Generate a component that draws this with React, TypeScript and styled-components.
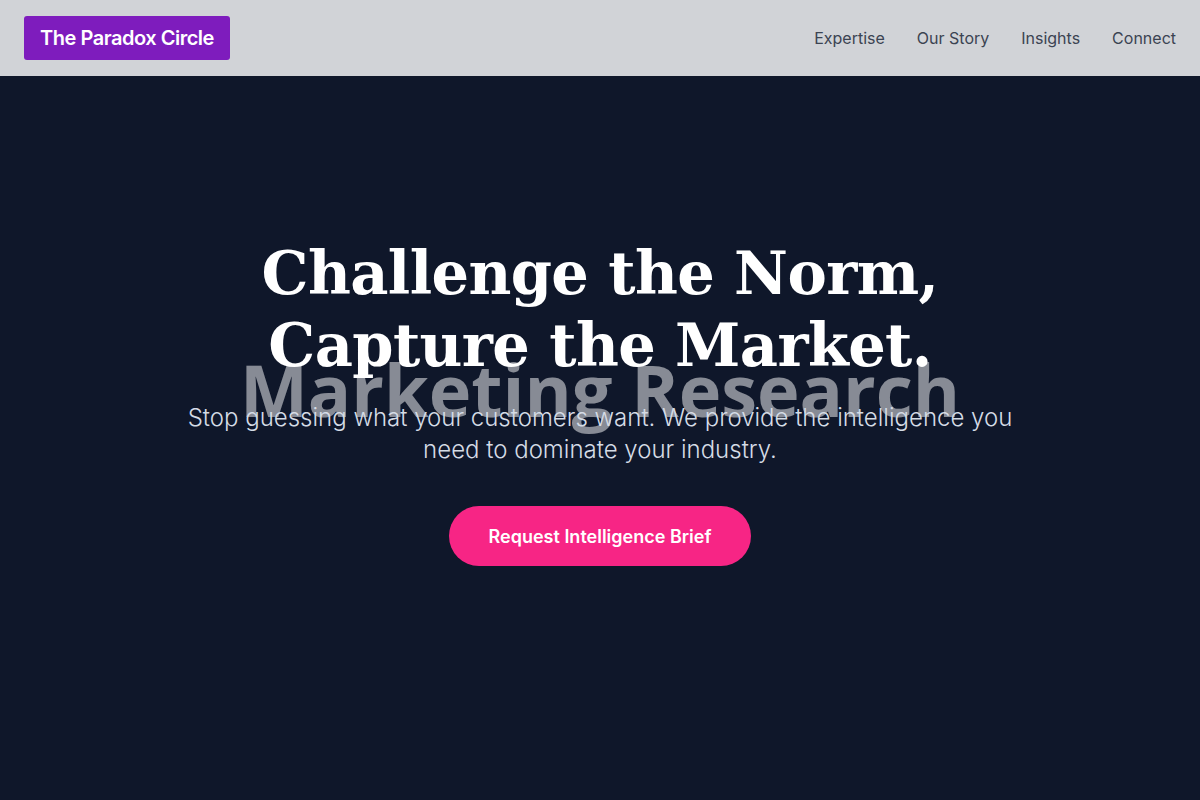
import React from "react";
import styled, { createGlobalStyle } from "styled-components";

const Global = createGlobalStyle`
  html, body { margin: 0; padding: 0; background: #0f172a; }
  body { font-family: Inter, "Noto Sans", sans-serif; }
  * { box-sizing: border-box; }
`;

const Page = styled.div`
  width: 100%;
  min-height: 800px;
  display: flex;
  flex-direction: column;
  background: #0f172a;
`;

const NavBar = styled.header`
  height: 76px;
  background: #d1d3d7;
  display: flex;
  align-items: center;
  justify-content: space-between;
  padding: 0 24px;
`;

const Logo = styled.a`
  display: inline-flex;
  align-items: center;
  height: 44px;
  padding: 0 16px;
  background: #7e1cbd;
  color: #ffffff;
  border-radius: 3px;
  font-family: Inter, sans-serif;
  font-weight: 600;
  font-size: 20px;
  letter-spacing: -0.48px;
  text-decoration: none;
`;

const NavLinks = styled.nav`
  display: flex;
  gap: 32px;
`;

const NavLink = styled.a`
  font-family: Inter, sans-serif;
  font-size: 16px;
  color: #3b4352;
  text-decoration: none;
`;

const Hero = styled.section`
  flex: 1;
  display: flex;
  flex-direction: column;
  align-items: center;
  padding-top: 162px;
  text-align: center;
`;

const HeadingWrap = styled.div`
  position: relative;
`;

const Backdrop = styled.div`
  position: absolute;
  left: 50%;
  top: 115px;
  transform: translateX(-50%);
  white-space: nowrap;
  font-family: "Open Sans", Lato, sans-serif;
  font-weight: 700;
  font-size: 72px;
  line-height: 1;
  color: rgba(255, 255, 255, 0.5);
  z-index: 0;
`;

const Heading = styled.h1`
  position: relative;
  z-index: 1;
  margin: 0;
  font-family: "DejaVu Serif", "Liberation Serif", serif;
  font-weight: 700;
  font-size: 59px;
  line-height: 72px;
  color: #ffffff;
  letter-spacing: -0.6px;
`;

const Subtitle = styled.p`
  position: relative;
  z-index: 1;
  margin: 20px 0 0;
  max-width: 840px;
  font-family: Inter, sans-serif;
  font-weight: 300;
  font-size: 24px;
  line-height: 32px;
  color: #d5dce6;
`;

const Cta = styled.button`
  margin-top: 40px;
  width: 302px;
  height: 60px;
  border: none;
  border-radius: 30px;
  background: #f72585;
  color: #ffffff;
  font-family: Inter, sans-serif;
  font-weight: 600;
  font-size: 18px;
  cursor: pointer;
`;

export default function App() {
  return (
    <>
      <Global />
      <Page>
        <NavBar>
          <Logo href="#">The Paradox Circle</Logo>
          <NavLinks>
            <NavLink href="#">Expertise</NavLink>
            <NavLink href="#">Our Story</NavLink>
            <NavLink href="#">Insights</NavLink>
            <NavLink href="#">Connect</NavLink>
          </NavLinks>
        </NavBar>
        <Hero>
          <HeadingWrap>
            <Backdrop>Marketing Research</Backdrop>
            <Heading>
              Challenge the Norm,
              <br />
              Capture the Market.
            </Heading>
          </HeadingWrap>
          <Subtitle>
            Stop guessing what your customers want. We provide the intelligence you need to dominate your industry.
          </Subtitle>
          <Cta>Request Intelligence Brief</Cta>
        </Hero>
      </Page>
    </>
  );
}
